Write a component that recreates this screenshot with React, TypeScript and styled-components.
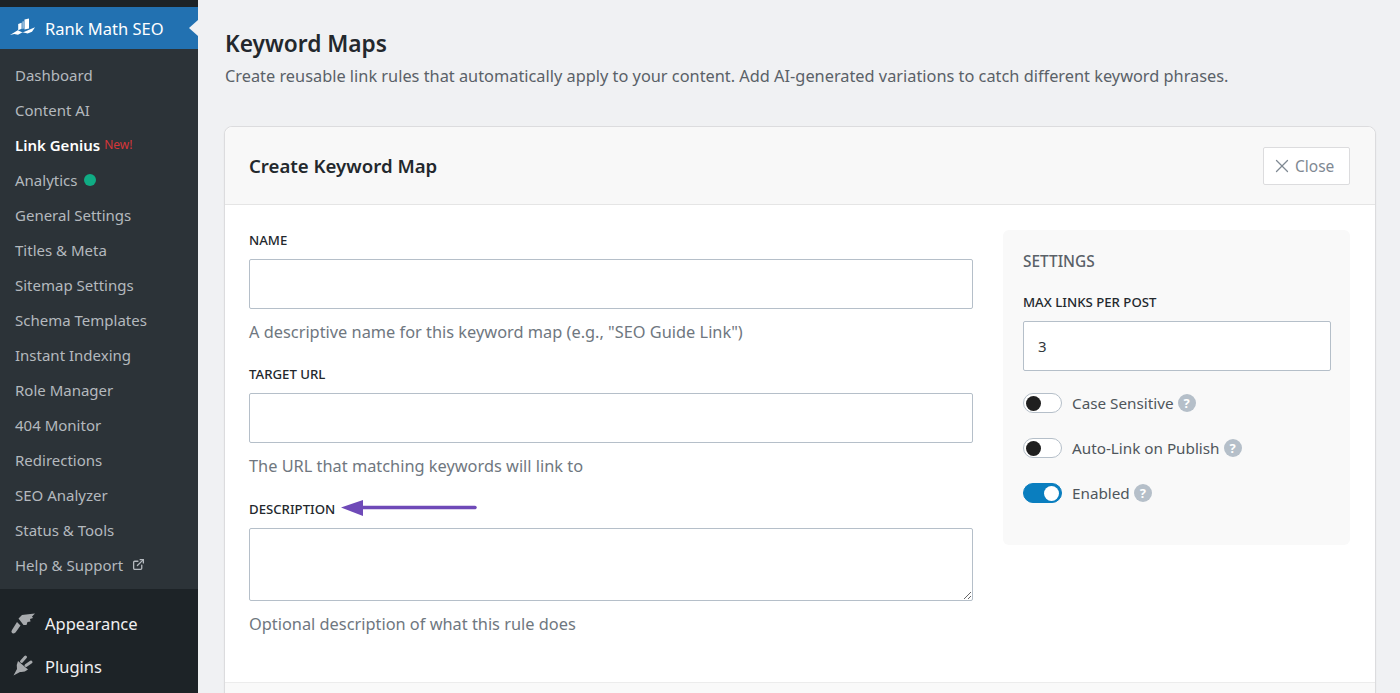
import React, { FC } from 'react';
import styled, { createGlobalStyle } from 'styled-components';
import { ExternalLink, X } from 'lucide-react';

const GlobalStyle = createGlobalStyle`
  html, body {
    margin: 0;
    height: 100%;
    overflow: hidden;
  }
  body {
    background: #f0f1f3;
    font-family: "Noto Sans", "Open Sans", sans-serif;
  }
`;

const Page = styled.div`
  display: flex;
  height: 693px;
  overflow: hidden;
`;

const Sidebar = styled.nav`
  background: #1d2327;
  flex: none;
  padding-top: 7px;
  width: 198px;
`;

const ActiveMenu = styled.div`
  align-items: center;
  background: #2271b1;
  color: #fff;
  display: flex;
  font-size: 16.5px;
  gap: 10px;
  height: 42px;
  padding-left: 10px;
  position: relative;

  &::after {
    border-bottom: 8px solid transparent;
    border-right: 9px solid #f0f1f3;
    border-top: 8px solid transparent;
    content: '';
    position: absolute;
    right: 0;
    top: 13px;
  }
`;

const SubMenu = styled.div`
  background: #2c3338;
  box-sizing: border-box;
  display: flex;
  flex-direction: column;
  height: 540px;
  margin-bottom: 13px;
  padding-top: 8px;
`;

const SubItem = styled.div<{ $current?: boolean }>`
  align-items: center;
  box-sizing: border-box;
  color: ${(p) => (p.$current ? '#fff' : '#b4b9be')};
  display: flex;
  font-size: 15px;
  font-weight: ${(p) => (p.$current ? 600 : 400)};
  height: 35px;
  padding-left: 15px;
`;

const NewTag = styled.span`
  color: #d63638;
  font-size: 12px;
  font-weight: 400;
  margin-left: 4px;
`;

const Dot = styled.span`
  background: #10ac84;
  border-radius: 50%;
  height: 12px;
  margin-left: 7px;
  width: 12px;
`;

const OutIcon = styled(ExternalLink)`
  margin-left: 9px;
`;

const MainMenu = styled.div`
  align-items: center;
  color: #f0f0f1;
  display: flex;
  font-size: 16.5px;
  gap: 10px;
  height: 43px;
  padding-left: 10px;
`;

const MenuIcon = styled.svg`
  flex: none;
  height: 25px;
  width: 25px;
`;

const Content = styled.main`
  box-sizing: border-box;
  flex: 1;
  min-width: 0;
  padding: 27px 24px 0 26px;
`;

const Title = styled.h1`
  color: #23282d;
  font-size: 22.7px;
  font-weight: 600;
  line-height: 34px;
  margin: 0 0 0 1px;
`;

const Lead = styled.p`
  color: #5a6168;
  font-size: 16.33px;
  line-height: 24px;
  margin: 3px 0 38px 1px;
`;

const Card = styled.section`
  background: #fff;
  border: 1px solid #dcdcde;
  border-radius: 8px 8px 0 0;
  box-shadow: 0 1px 2px rgba(0, 0, 0, 0.05);
`;

const CardHeader = styled.header`
  align-items: center;
  background: #f8f8f8;
  border-bottom: 1px solid #e5e5e5;
  border-radius: 8px 8px 0 0;
  display: flex;
  height: 77px;
  justify-content: space-between;
  padding: 0 25px 0 24px;
`;

const CardTitle = styled.h2`
  color: #23282d;
  font-size: 18.6px;
  font-weight: 600;
  margin: 0;
`;

const CloseButton = styled.button`
  align-items: center;
  background: #fff;
  border: 1px solid #dcdcde;
  border-radius: 2px;
  box-sizing: border-box;
  color: #7f8993;
  display: flex;
  font-family: inherit;
  font-size: 15.5px;
  gap: 2px;
  height: 38px;
  padding: 0 0 0 7px;
  width: 87px;
`;

const CardBody = styled.div`
  border-bottom: 1px solid #ececec;
  box-sizing: border-box;
  display: grid;
  gap: 30px;
  grid-template-columns: 724px 347px;
  height: 478px;
  padding: 26px 25px 0 24px;
`;

const CardFooter = styled.div`
  background: #f9f9f9;
  height: 60px;
`;

const FormColumn = styled.div`
  display: flex;
  flex-direction: column;
`;

const Field = styled.div`
  display: flex;
  flex: none;
  flex-direction: column;
  height: 134px;
`;

const Label = styled.label`
  color: #23282d;
  display: block;
  font-size: 13.2px;
  font-weight: 500;
  height: 19px;
  line-height: 19px;
  margin-bottom: 9px;
  text-transform: uppercase;
`;

const Input = styled.input<{ $spaced?: boolean }>`
  background: #fff;
  border: 1px solid #b5bfc9;
  border-radius: 2px;
  box-sizing: border-box;
  color: #32373c;
  flex: none;
  font-family: inherit;
  font-size: 15px;
  height: 50px;
  margin-bottom: ${(p) => (p.$spaced ? '20px' : '0')};
  outline: none;
  padding: 0 14px;
  width: 100%;
`;

const TextArea = styled.textarea`
  background: #fff;
  border: 1px solid #b5bfc9;
  border-radius: 2px;
  box-sizing: border-box;
  display: block;
  flex: none;
  height: 73px;
  outline: none;
  width: 100%;
`;

const Hint = styled.p`
  color: #6f7780;
  font-size: 16.35px;
  line-height: 22px;
  margin: 12px 0 0;
`;

const LabelRow = styled.div`
  padding-top: 1px;
  position: relative;
`;

const Arrow = styled.svg`
  height: 18px;
  left: 91px;
  position: absolute;
  top: 0;
  width: 137px;
`;

const Panel = styled.aside`
  align-self: start;
  background: #f9f9f9;
  border-radius: 6px;
  box-sizing: border-box;
  height: 315px;
  margin-top: -1px;
  padding: 20px 19px 0 20px;
`;

const PanelTitle = styled.h3`
  color: #5a6168;
  font-size: 15.4px;
  font-weight: 500;
  line-height: 24px;
  margin: 0 0 19px;
  text-transform: uppercase;
`;

const ToggleRow = styled.div`
  align-items: center;
  color: #4f565c;
  display: flex;
  font-size: 15.25px;
  height: 24px;
  margin-bottom: 21px;
`;

const Track = styled.span<{ $on?: boolean }>`
  align-items: center;
  background: ${(p) => (p.$on ? '#0a7ebf' : '#fff')};
  border: 1px solid ${(p) => (p.$on ? '#0a7ebf' : '#b5bfc9')};
  border-radius: 10px;
  box-sizing: border-box;
  display: flex;
  flex: none;
  height: 20px;
  justify-content: ${(p) => (p.$on ? 'flex-end' : 'flex-start')};
  margin-right: 10px;
  padding: 0 2px;
  width: 39px;
`;

const Knob = styled.span<{ $on?: boolean }>`
  background: ${(p) => (p.$on ? '#fff' : '#1f1f1f')};
  border-radius: 50%;
  height: 15px;
  width: 15px;
`;

const Help = styled.span`
  align-items: center;
  background: #b5bfc9;
  border-radius: 50%;
  color: #fff;
  display: flex;
  font-size: 13px;
  font-weight: 700;
  height: 18px;
  justify-content: center;
  margin-left: 4px;
  width: 18px;
`;

const submenu = [
  'Dashboard',
  'Content AI',
  'Link Genius',
  'Analytics',
  'General Settings',
  'Titles & Meta',
  'Sitemap Settings',
  'Schema Templates',
  'Instant Indexing',
  'Role Manager',
  '404 Monitor',
  'Redirections',
  'SEO Analyzer',
  'Status & Tools',
  'Help & Support',
];

const fields = [
  { label: 'Name', hint: 'A descriptive name for this keyword map (e.g., "SEO Guide Link")' },
  { label: 'Target URL', hint: 'The URL that matching keywords will link to' },
];

const toggles = [
  { label: 'Case Sensitive', on: false },
  { label: 'Auto-Link on Publish', on: false },
  { label: 'Enabled', on: true },
];

const RankMathIcon: FC = () => (
  <MenuIcon viewBox="0 0 25 25">
    <path fill="#fff" d="M8.2 8l3.4-1.2v6l-3.4 1.4zM12.6 5.500l.9-.3v7.400l-.9.3zM14.500 3.400l4.500-1v10.200l-4.500 1z" />
    <path fill="#fff" d="M0 19l7.800-4.800 4.800 2.200 4.800-1.800 7.600-3.400-3 4.600-4.400 1.800-5-1.400-4.600 2.600-3.800-.8z" />
  </MenuIcon>
);

const BrushIcon: FC = () => (
  <MenuIcon viewBox="0 0 25 25">
    <path
      fill="#a7aaad"
      d="M7 11l3.500 3.500-5 7q-2 1.600-3.500.6Q.8 20.500 2 19zM8.500 7.500L12 4q6-.8 13-1.500l-3 3 1 1.500-3 1 .5 2.500-3 .5-1 3h-3z"
    />
  </MenuIcon>
);

const PlugIcon: FC = () => (
  <MenuIcon viewBox="0 0 25 25">
    <path fill="#a7aaad" d="M3.500 21.500L7 15q-1-4 1-8l10 8.500q-3.500 3-8 2.500z" />
    <path stroke="#a7aaad" strokeWidth="3" strokeLinecap="round" d="M11.500 7.500L15.500 3M16 11.500L21 8" />
  </MenuIcon>
);

const App: FC = () => (
  <Page>
    <GlobalStyle />
    <Sidebar>
      <ActiveMenu>
        <RankMathIcon />
        Rank Math SEO
      </ActiveMenu>
      <SubMenu>
        {submenu.map((item) => (
          <SubItem key={item} $current={item === 'Link Genius'}>
            {item}
            {item === 'Link Genius' && <NewTag>New!</NewTag>}
            {item === 'Analytics' && <Dot />}
            {item === 'Help & Support' && <OutIcon size={13} strokeWidth={2.4} />}
          </SubItem>
        ))}
      </SubMenu>
      <MainMenu>
        <BrushIcon />
        Appearance
      </MainMenu>
      <MainMenu>
        <PlugIcon />
        Plugins
      </MainMenu>
    </Sidebar>
    <Content>
      <Title>Keyword Maps</Title>
      <Lead>
        Create reusable link rules that automatically apply to your content. Add AI-generated
        variations to catch different keyword phrases.
      </Lead>
      <Card>
        <CardHeader>
          <CardTitle>Create Keyword Map</CardTitle>
          <CloseButton>
            <X size={22} strokeWidth={1.4} />
            Close
          </CloseButton>
        </CardHeader>
        <CardBody>
          <FormColumn>
            {fields.map((field) => (
              <Field key={field.label}>
                <Label>{field.label}</Label>
                <Input />
                <Hint>{field.hint}</Hint>
              </Field>
            ))}
            <Field>
              <LabelRow>
                <Label>Description</Label>
                <Arrow viewBox="0 0 137 18">
                  <path d="M135 8.500H22" stroke="#6f4ab8" strokeWidth="3.500" strokeLinecap="round" />
                  <path d="M1 8.500L23 1v16z" fill="#6f4ab8" />
                </Arrow>
              </LabelRow>
              <TextArea />
              <Hint>Optional description of what this rule does</Hint>
            </Field>
          </FormColumn>
          <Panel>
            <PanelTitle>Settings</PanelTitle>
            <Label as="div">Max links per post</Label>
            <Input defaultValue="3" $spaced />
            {toggles.map((toggle) => (
              <ToggleRow key={toggle.label}>
                <Track $on={toggle.on}>
                  <Knob $on={toggle.on} />
                </Track>
                {toggle.label}
                <Help>?</Help>
              </ToggleRow>
            ))}
          </Panel>
        </CardBody>
        <CardFooter />
      </Card>
    </Content>
  </Page>
);

export default App;
